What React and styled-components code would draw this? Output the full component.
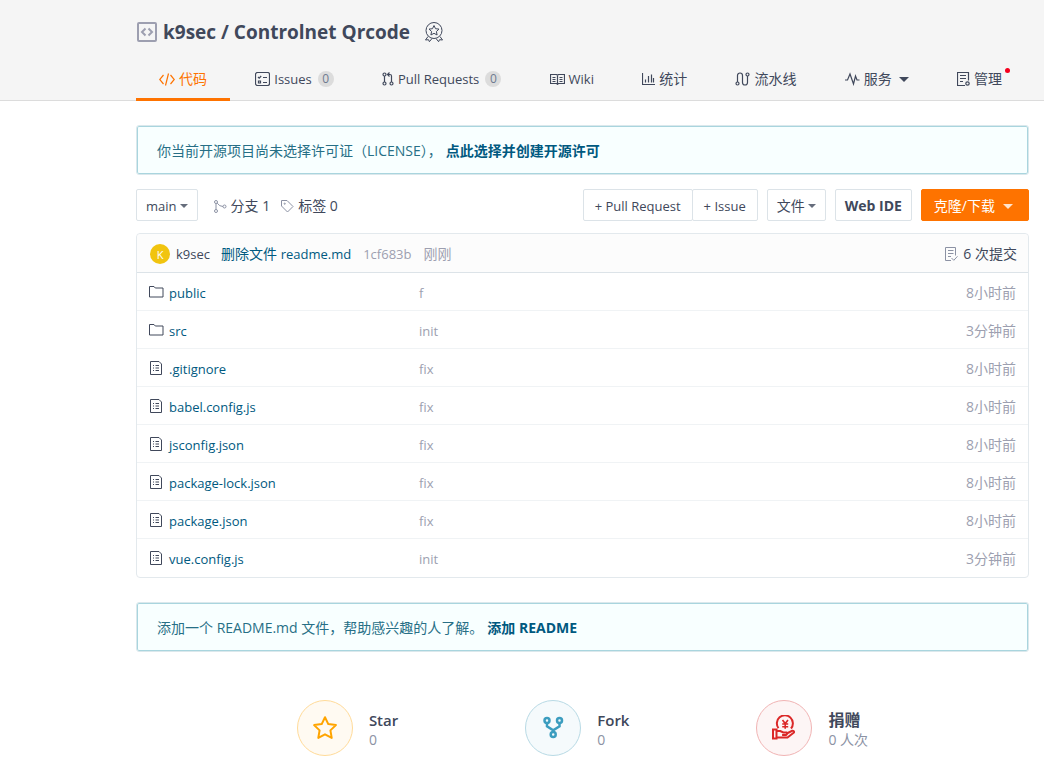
import React, { useState } from 'react';
import styled, { createGlobalStyle } from 'styled-components';

const files = [
  { name: 'public', type: 'folder', message: 'f', time: '8小时前' },
  { name: 'src', type: 'folder', message: 'init', time: '3分钟前' },
  { name: '.gitignore', type: 'file', message: 'fix', time: '8小时前' },
  { name: 'babel.config.js', type: 'file', message: 'fix', time: '8小时前' },
  { name: 'jsconfig.json', type: 'file', message: 'fix', time: '8小时前' },
  { name: 'package-lock.json', type: 'file', message: 'fix', time: '8小时前' },
  { name: 'package.json', type: 'file', message: 'fix', time: '8小时前' },
  { name: 'vue.config.js', type: 'file', message: 'init', time: '3分钟前' },
];

const tabs = [
  { key: 'code', label: '代码', icon: 'code' },
  { key: 'issues', label: 'Issues', icon: 'issues', count: 0, latin: true },
  { key: 'pulls', label: 'Pull Requests', icon: 'pull', count: 0, latin: true },
  { key: 'wiki', label: 'Wiki', icon: 'wiki', latin: true },
  { key: 'stats', label: '统计', icon: 'chart' },
  { key: 'pipeline', label: '流水线', icon: 'pipeline' },
  { key: 'service', label: '服务', icon: 'pulse', caret: true },
  { key: 'manage', label: '管理', icon: 'manage', dot: true },
];

const icons = {
  repo: <><rect x="1" y="1" width="18" height="18" rx="1" strokeWidth="2" /><path d="M8.500 6.500 5 10l3.500 3.500M11.500 6.500 15 10l-3.500 3.500" strokeWidth="2" /></>,
  medal: <><circle cx="10" cy="8.500" r="8" /><path d="m10 3.500 1.500 3.200 3.500.4-2.600 2.400.7 3.500-3.100-1.700L6.900 13l.7-3.500L5 7.100l3.500-.4z" /><path d="m4 14.500-2.500 3.500 3-.3.900 2L8 16.500M16 14.500l2.500 3.500-3-.3-.9 2-2.600-3.200" /></>,
  code: <path d="M4.500 3 .7 7.500 4.500 12M11.500 3l3.800 4.500-3.800 4.500M9.500 1.500l-3 12" />,
  issues: <><rect x=".5" y=".5" width="14" height="13" rx="2" /><path d="m3 5 1.200 1.200L6.200 4M8 5.500h4M3.500 9h2v2h-2zM8 10.500h4" /></>,
  pull: <><circle cx="2.500" cy="2.500" r="1.500" /><circle cx="2.500" cy="11.500" r="1.500" /><circle cx="9.500" cy="11.500" r="1.500" /><path d="M2.500 4v6M9.500 10V4q0-1.500-1.500-1.500H6M7.500.5l-2 2 2 2" /></>,
  wiki: <path d="M.5 1.500h6l1 .8 1-.8h6v9h-6l-1 .8-1-.8h-6zM7.500 2.300v9M2.500 4.500h3M2.500 6.500h3M2.500 8.500h3M9.500 4.500h3M9.500 6.500h3M9.500 8.500h3" />,
  chart: <path d="M.5 0v11.500H13M3.500 6.500v3M6.500 3v6.500M9.500 1.500v8M11.500 5v4.500" />,
  pipeline: <><circle cx="2.500" cy="11.500" r="1.500" /><circle cx="12.500" cy="2.500" r="1.500" /><path d="M2.500 10V3.500a2.500 2.500 0 0 1 5 0v7a2.500 2.500 0 0 0 5 0V4" /></>,
  pulse: <path d="M0 8h2.500L5 2l3.500 10L10.500 4l1.500 4h2.500" />,
  manage: <><path d="M8 13.500H.5V.5h11v8M3 3.500h6M3 6.500h6M3 9.500h3" /><circle cx="10.500" cy="11.500" r="1.700" /></>,
  branch: <><circle cx="2" cy="2" r="1.500" /><circle cx="2" cy="11" r="1.500" /><circle cx="10.500" cy="6.500" r="1.500" /><path d="M2 3.500v6M3.200 3.200Q5.500 6.500 9 6.500" /></>,
  tag: <><path d="M.5.5h5.500l6 6-5.500 5.500-6-6z" /><circle cx="3.700" cy="3.700" r=".6" /></>,
  commits: <path d="M6 13.500H.5V.5h10v8M3 3.500h5.500M3 6.500h5.500M3 9.500h3M6.500 11l2.300 2.300 3.700-4" />,
  folder: <path d="M.5 12V1.500H5l1.300 1.500H14v9z" />,
  file: <path d="M1.500.5H10L12.500 3v10.500h-11zM4 4.500h1M6.500 4.500H10M4 7h1M6.500 7H10M4 9.500h1M6.500 9.500H10" />,
  star: <path d="m13 2.200 3.300 6.900 7.600 1-5.500 5.300 1.300 7.500-6.700-3.600-6.700 3.600 1.300-7.500-5.500-5.300 7.600-1z" strokeWidth="2" strokeLinejoin="round" />,
  fork: <><circle cx="7" cy="5.500" r="2.500" /><circle cx="19.500" cy="5.500" r="2.500" /><circle cx="13.200" cy="19.500" r="2.500" /><path d="M7 8v3.200l6.200 4 6.300-4V8M13.200 14.500v3" /></>,
  donate: <><path d="M7.500 13.200A8 8 0 1 1 20 13.500" /><path d="m11.500 5 2.700 3.600L17 5M14.200 8.600v5.200M11.200 9h6M11.200 11.700h6" strokeWidth="1.600" /><path d="M2 14.500h3.500v9H2zM5.500 16h3.800l3 1.500h3.200q1.300 1.300-.4 2.500h-4M15.700 18.500l5.500-2.700q2.300-.2 1.800 1.700l-6.500 5H5.500" /></>,
};

const Icon = ({ name, width, height, stroke = 1, className }) => (
  <Drawing
    className={className}
    width={width}
    height={height}
    viewBox={`0 0 ${width} ${height}`}
    strokeWidth={stroke}
    aria-hidden="true"
  >
    {icons[name]}
  </Drawing>
);

const sizes = {
  code: [16, 15], issues: [15, 14], pull: [12, 14], wiki: [15, 12],
  chart: [13, 12], pipeline: [15, 14], pulse: [15, 14], manage: [13, 14],
};

const App = () => {
  const [active, setActive] = useState('code');

  return (
    <>
      <GlobalStyle />
      <Header>
        <TitleRow>
          <RepoIcon name="repo" width={20} height={20} />
          <Title><TitleLink href="#owner">k9sec</TitleLink> / <TitleLink href="#repo">Controlnet Qrcode</TitleLink></Title>
          <Icon name="medal" width={20} height={21} />
        </TitleRow>
        <Nav>
          {tabs.map(tab => (
            <Tab key={tab.key} href={`#${tab.key}`} $active={tab.key === active} onClick={() => setActive(tab.key)}>
              <Icon name={tab.icon} width={sizes[tab.icon][0]} height={sizes[tab.icon][1]} stroke={1.2} />
              {tab.latin ? <Latin>{tab.label}</Latin> : tab.label}
              {tab.count !== undefined && <Count>{tab.count}</Count>}
              {tab.caret && <Caret $size={5} />}
              {tab.dot && <Dot />}
            </Tab>
          ))}
        </Nav>
      </Header>

      <Main>
        <Notice>
          你当前开源项目尚未选择许可证（LICENSE），<NoticeLink href="#license">点此选择并创建开源许可</NoticeLink>
        </Notice>

        <Toolbar>
          <Button><Latin>main</Latin><Caret $size={4} /></Button>
          <Refs>
            <RefLink href="#branches"><Icon name="branch" width={13} height={13} />分支 1</RefLink>
            <RefLink href="#tags"><Icon name="tag" width={13} height={13} />标签 0</RefLink>
          </Refs>
          <Actions>
            <ButtonGroup>
              <Button><Latin>+ Pull Request</Latin></Button>
              <Button><Latin>+ Issue</Latin></Button>
            </ButtonGroup>
            <Button>文件<Caret $size={4} /></Button>
            <Button $bold>Web IDE</Button>
            <CloneButton>克隆/下载<Caret $size={5} /></CloneButton>
          </Actions>
        </Toolbar>

        <FileBox>
          <LastCommit>
            <Avatar>K</Avatar>
            <Author href="#k9sec"><Latin>k9sec</Latin></Author>
            <CommitLink href="#commit">删除文件 <Latin>readme.md</Latin></CommitLink>
            <Muted><Latin>1cf683b</Latin></Muted>
            <Muted>刚刚</Muted>
            <CommitCount href="#commits"><Icon name="commits" width={13} height={14} />6 次提交</CommitCount>
          </LastCommit>
          <Table>
            <tbody>
              {files.map(file => (
                <Row key={file.name}>
                  <NameCell>
                    <FileLink href={`#${file.name}`}>
                      {file.type === 'folder'
                        ? <Icon name="folder" width={15} height={13} />
                        : <Icon name="file" width={13} height={14} />}
                      <Latin>{file.name}</Latin>
                    </FileLink>
                  </NameCell>
                  <Cell><Latin>{file.message}</Latin></Cell>
                  <TimeCell>{file.time}</TimeCell>
                </Row>
              ))}
            </tbody>
          </Table>
        </FileBox>

        <Notice>
          添加一个 README.md 文件，帮助感兴趣的人了解。<NoticeLink href="#readme">添加 README</NoticeLink>
        </Notice>

        <Stats>
          <Stat>
            <Circle aria-label="Star" $color="#ffa400" $line="#ffdb99" $back="#fffaf2"><Icon name="star" width={26} height={26} stroke={2} /></Circle>
            <StatText><StatName>Star</StatName><StatValue>0</StatValue></StatText>
          </Stat>
          <Stat>
            <Circle aria-label="Fork" $color="#3c9dbf" $line="#b8dae5" $back="#f5fafc"><Icon name="fork" width={26} height={26} stroke={2.5} /></Circle>
            <StatText><StatName>Fork</StatName><StatValue>0</StatValue></StatText>
          </Stat>
          <Stat>
            <Circle aria-label="捐赠" $color="#db2828" $line="#f1b4b4" $back="#fdf5f5"><Icon name="donate" width={26} height={26} stroke={2} /></Circle>
            <StatText><StatName $large>捐赠</StatName><StatValue>0 人次</StatValue></StatText>
          </Stat>
        </Stats>
      </Main>
    </>
  );
};

const GlobalStyle = createGlobalStyle`
* {
  box-sizing: border-box;
}
body {
  margin: 0;
  background: #fff;
  color: #40485b;
  font-family: "Open Sans", "Noto Sans CJK SC", sans-serif;
  font-size: 14px;
  line-height: 20px;
}
a {
  color: inherit;
  text-decoration: none;
}
button {
  font: inherit;
  color: inherit;
  cursor: pointer;
}
`

const Drawing = styled.svg`
fill: none;
stroke: currentColor;
flex: none;
`

const Latin = styled.span`
font-size: 13px;
`

const Header = styled.header`
background: #f5f5f5;
border-bottom: 1px solid #dcdcdc;
padding: 18px 15px 0 136px;
`

const TitleRow = styled.div`
display: flex;
align-items: center;
height: 28px;
`

const RepoIcon = styled(Icon)`
color: #9d9fb0;
margin: 0 6px 0 1px;
`

const Title = styled.h2`
margin: 0 14px 0 0;
font-size: 19px;
line-height: 28px;
font-weight: 700;
`

const TitleLink = styled.a`
&:hover {
  color: #005980;
}
`

const Nav = styled.nav`
display: flex;
justify-content: space-between;
margin: 12px 4px -1px 0;
`

const Tab = styled.a`
display: flex;
align-items: center;
gap: 4px;
height: 43px;
padding: 2px 23px 0;
white-space: nowrap;
border-bottom: 3px solid ${props => props.$active ? '#fe7300' : 'transparent'};
color: ${props => props.$active ? '#fe7300' : '#40485b'};
`

const Count = styled.span`
min-width: 16px;
height: 16px;
margin-left: 2px;
border-radius: 8px;
background: #dcdcdc;
color: #6e7a90;
font-size: 12px;
line-height: 16px;
text-align: center;
`

const Caret = styled.span`
border: ${props => props.$size}px solid transparent;
border-top-color: currentColor;
border-bottom: 0;
margin-left: 3px;
`

const Dot = styled.span`
align-self: flex-start;
width: 5px;
height: 5px;
margin: 8px -8px 0 -1px;
border-radius: 50%;
background: #f5001d;
`

const Main = styled.main`
padding: 24px 15px 24px 136px;
`

const Notice = styled.div`
padding: 14px 20px 12px;
border: 1px solid #dbe8ec;
border-radius: 3px;
box-shadow: 0 0 0 1px #a9d5de inset;
background: #f8ffff;
color: #276f86;
line-height: 22px;
`

const NoticeLink = styled.a`
margin-left: 4px;
color: #005980;
font-weight: 700;
`

const Toolbar = styled.div`
display: flex;
align-items: center;
margin: 14px 0 12px;
`

const Button = styled.button`
display: flex;
align-items: center;
height: 32px;
padding: 2px 9px 0;
border: 1px solid #dce3e8;
border-radius: 2px;
background: #fff;
font-weight: ${props => props.$bold ? 700 : 400};
white-space: nowrap;

&:hover {
  background: #f8f8f9;
}

${Caret} {
  opacity: 0.8;
}
`

const CloneButton = styled(Button)`
padding: 2px 15px 0 12px;
border-color: #fe7300;
background: #fe7300;
color: #fff;

&:hover {
  background: #e56800;
}

${Caret} {
  margin-left: 8px;
}
`

const ButtonGroup = styled.div`
display: flex;

${Button} {
  padding: 2px 11px 0;
}

${Button} + ${Button} {
  margin-left: -1px;
}
`

const Refs = styled.div`
display: flex;
gap: 11px;
margin-left: 16px;
padding-top: 2px;
`

const RefLink = styled.a`
display: flex;
align-items: center;
gap: 4px;

svg {
  color: #8c92a4;
}
`

const Actions = styled.div`
display: flex;
gap: 9px;
margin-left: auto;
`

const FileBox = styled.section`
margin-bottom: 24px;
border: 1px solid #e3e9ed;
border-radius: 4px;
`

const LastCommit = styled.div`
display: flex;
align-items: center;
height: 39px;
padding: 2px 11px 0 13px;
border-bottom: 1px solid #dce3e8;
border-radius: 4px 4px 0 0;
background: #fcfcfc;
`

const Avatar = styled.span`
width: 20px;
height: 20px;
border-radius: 50%;
background: #f1c40f;
color: #fff;
font-size: 11px;
line-height: 22px;
text-align: center;
`

const Author = styled.a`
margin-left: 6px;
`

const CommitLink = styled.a`
margin-left: 11px;
color: #005980;
`

const Muted = styled.span`
margin-left: 12px;
color: #9d9fb0;
`

const CommitCount = styled.a`
display: flex;
align-items: center;
gap: 5px;
margin-left: auto;

svg {
  color: #8c92a4;
}
`

const Table = styled.table`
width: 100%;
border-spacing: 0;
table-layout: fixed;
`

const Cell = styled.td`
height: 38px;
padding: 2px 12px 0 0;
border-bottom: 1px solid #f0f3f5;
color: #9d9fb0;
`

const NameCell = styled(Cell)`
width: 282px;
padding-left: 12px;
`

const TimeCell = styled(Cell)`
width: 120px;
text-align: right;
`

const Row = styled.tr`
&:last-child td {
  border-bottom-color: transparent;
}
`

const FileLink = styled.a`
display: grid;
grid-template-columns: 15px 1fr;
gap: 5px;
color: #005980;

svg {
  margin-top: 2px;
  color: #40485b;
}
`

const Stats = styled.div`
display: flex;
justify-content: center;
gap: 127px;
margin-top: 48px;
`

const Stat = styled.div`
display: flex;
align-items: center;
gap: 16px;
`

const Circle = styled.button`
display: flex;
align-items: center;
justify-content: center;
width: 56px;
height: 56px;
padding: 0;
border: 1px solid ${props => props.$line};
border-radius: 50%;
background: ${props => props.$back};
color: ${props => props.$color};
`

const StatText = styled.div`
padding-top: 3px;
`

const StatName = styled.div`
font-size: ${props => props.$large ? 16 : 15}px;
font-weight: 600;
`

const StatValue = styled.div`
color: #8c92a4;
`

export default App;
